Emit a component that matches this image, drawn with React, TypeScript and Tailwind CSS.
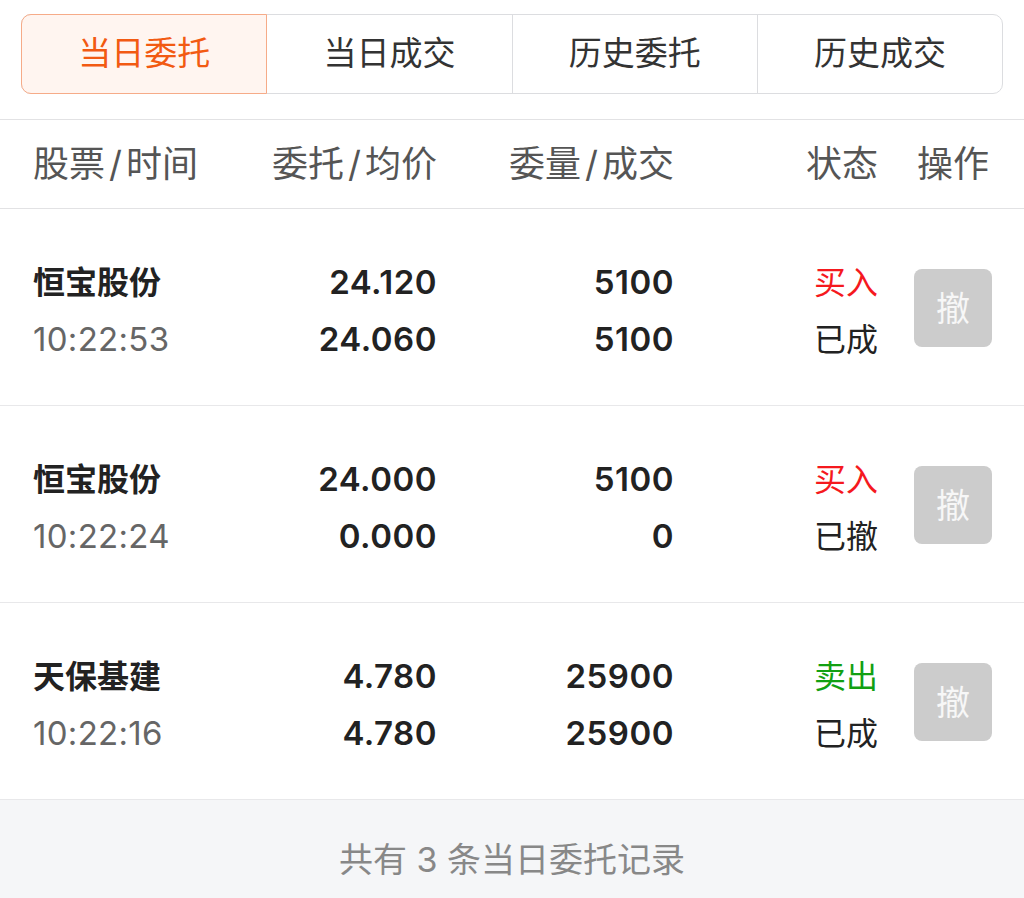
import React from "react";

type Order = {
  name: string;
  time: string;
  price: string;
  avg: string;
  qty: string;
  filled: string;
  side: "buy" | "sell";
  status: string;
};

const orders: Order[] = [
  { name: "恒宝股份", time: "10:22:53", price: "24.120", avg: "24.060", qty: "5100", filled: "5100", side: "buy", status: "已成" },
  { name: "恒宝股份", time: "10:22:24", price: "24.000", avg: "0.000", qty: "5100", filled: "0", side: "buy", status: "已撤" },
  { name: "天保基建", time: "10:22:16", price: "4.780", avg: "4.780", qty: "25900", filled: "25900", side: "sell", status: "已成" },
];

const tabs = ["当日委托", "当日成交", "历史委托", "历史成交"];

const font = { fontFamily: '"Inter", "Noto Sans CJK SC", sans-serif' };

function Slashed({ a, b }: { a: string; b: string }) {
  return (
    <>
      {a}
      <span className="mx-[4px]">/</span>
      {b}
    </>
  );
}

export default function App() {
  return (
    <div className="w-full bg-white text-[#222]" style={font}>
      {/* Tabs */}
      <div className="px-[21px] pt-[14px] pb-[25px]">
        <div className="flex h-[80px] rounded-[10px] border border-[#dcdde0]">
          {tabs.map((t, i) =>
            i === 0 ? (
              <div
                key={t}
                className="-my-px -ml-px flex flex-1 items-center justify-center rounded-l-[10px] border border-[#f6ab88] bg-[#fff5f0] text-[33px] text-[#f25a12]"
              >
                {t}
              </div>
            ) : (
              <div
                key={t}
                className={
                  "flex flex-1 items-center justify-center text-[33px] text-[#333]" +
                  (i > 1 ? " border-l border-[#dcdde0]" : "")
                }
              >
                {t}
              </div>
            )
          )}
        </div>
      </div>

      {/* Header */}
      <div className="flex h-[90px] items-center border-y border-[#e2e2e4] pl-[33px] pr-[32px] text-[36px] text-[#555]">
        <div className="w-[180px] whitespace-nowrap"><Slashed a="股票" b="时间" /></div>
        <div className="w-[224px] text-right whitespace-nowrap"><Slashed a="委托" b="均价" /></div>
        <div className="w-[237px] text-right whitespace-nowrap"><Slashed a="委量" b="成交" /></div>
        <div className="w-[204px] text-right">状态</div>
        <div className="ml-[36px] w-[78px] text-center">操作</div>
      </div>

      {/* Rows */}
      {orders.map((o, i) => (
        <div
          key={i}
          className="flex h-[197px] items-start border-b border-[#e8e8ea] pl-[33px] pr-[32px] pt-[45px] text-[32px] leading-[57px]"
        >
          <div className="w-[180px]">
            <div className="font-semibold text-[#222]">{o.name}</div>
            <div className="text-[33px] tracking-[0.3px] text-[#666]">{o.time}</div>
          </div>
          <div className="w-[224px] text-right text-[33px] font-semibold tracking-[0.5px]">
            <div>{o.price}</div>
            <div>{o.avg}</div>
          </div>
          <div className="w-[237px] text-right text-[33px] font-semibold tracking-[0.5px]">
            <div>{o.qty}</div>
            <div>{o.filled}</div>
          </div>
          <div className="w-[204px] text-right">
            <div className={o.side === "buy" ? "text-[#f5191e]" : "text-[#12a012]"}>
              {o.side === "buy" ? "买入" : "卖出"}
            </div>
            <div className="text-[#222]">{o.status}</div>
          </div>
          <div className="ml-[36px] mt-[15px] flex h-[78px] w-[78px] items-center justify-center rounded-[8px] bg-[#cccccc] text-[34px] text-[#f7f7f7]">
            撤
          </div>
        </div>
      ))}

      {/* Footer */}
      <div className="bg-[#f5f6f8] pt-[34px] pb-[34px] text-center text-[34px] leading-[51px] text-[#888]">
        共有 3 条当日委托记录
      </div>
    </div>
  );
}
